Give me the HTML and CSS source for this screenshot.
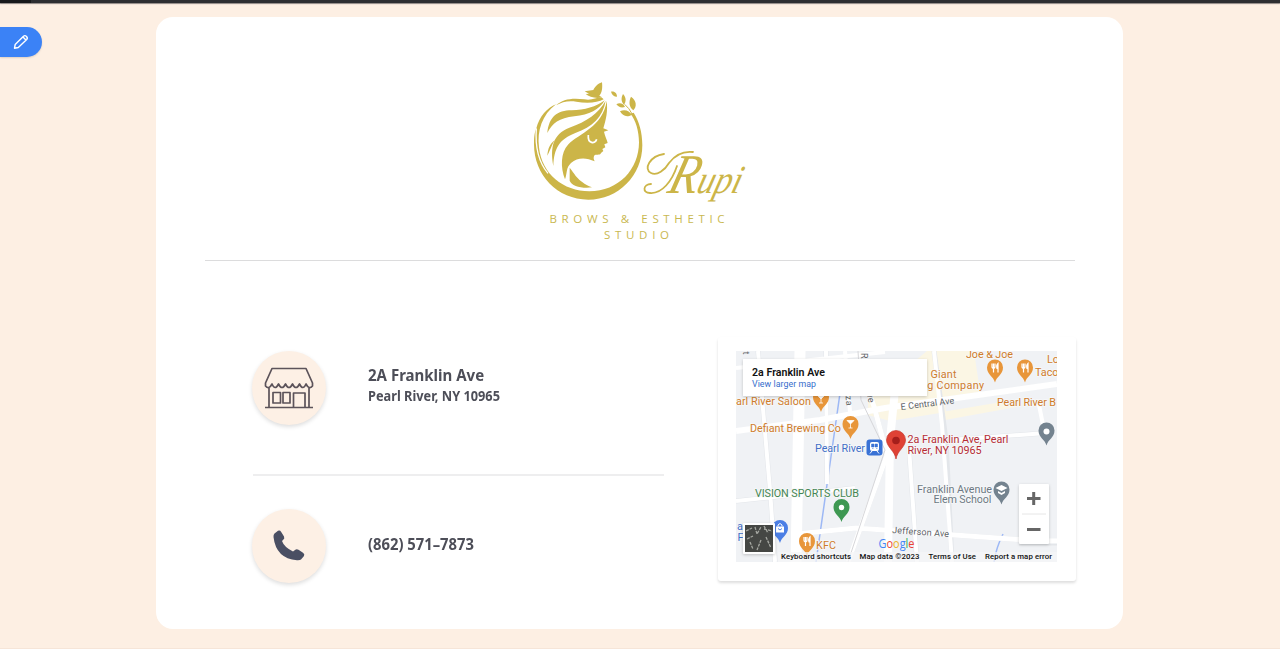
FILE: index.html
```html
<!DOCTYPE html>
<html lang="en">
<head>
<meta charset="utf-8">
<title>Rupi Brows &amp; Esthetic Studio</title>
<link rel="stylesheet" href="styles.css">
</head>
<body>
<div class="topbar"><span class="topbar-dark"></span></div>
<button class="edit" aria-label="Edit">
  <svg width="16" height="16" viewBox="0 0 16 16" fill="none" stroke="#fff" stroke-width="1.400" stroke-linejoin="round"><path d="M1.500 14.200 2.200 10.500 10.500 2.200Q12 1 13.500 2.400 15 4 13.700 5.400L5.300 13.500ZM10 3 12.900 6"/></svg>
</button>
<main class="card">
  <header class="brand">
    <svg class="logo" viewBox="530 75 220 175" width="220" height="175">
      <g transform="translate(520 75) scale(.33333)" fill="#ccb548">
        <path d="M108 88C66 120 51 167 57 217 65 297 130 349 208 349 296 349 357 283 357 202 357 167 347 135 331 116L341 113C357 138 367 171 367 210 367 302 295 374 205 374 112 374 42 300 42 208 42 185 44 171 49 160 58 124 82 98 108 88Z"/>
        <path d="M49 160C45 215 56 262 84 295" fill="none" stroke="#fff" stroke-width="4"/>
        <path d="M108 91C128 72 157 68 193 73 219 77 230 66 246 68L251 73C233 84 198 86 169 80 145 76 126 81 108 91Z"/>
        <path d="M82 174C87 126 111 106 155 106 194 106 229 95 254 76 238 105 208 119 163 124 117 129 97 145 82 174Z"/>
        <path d="M100 273C90 215 99 178 148 158 201 139 235 115 257 77 249 126 217 155 166 174 119 192 102 219 100 273Z"/>
        <path d="M82 242C84 220 89 208 104 196 94 212 93 222 82 242Z"/>
        <path d="M260 78C264 108 258 134 250 160L265 166 252 170C255 184 261 194 263 204L253 208 256 217 247 222 250 228 243 234C240 242 230 237 224 240 219 247 221 253 224 259 199 247 173 246 153 264 137 279 142 296 135 313 121 277 122 233 144 209 178 174 248 157 260 78Z"/>
        <path d="M205 180C202 207 226 208 230 193" fill="none" stroke="#fff" stroke-width="5"/>
        <path d="M149 278C162 292 170 318 216 337 185 341 155 333 149 317Z"/>
        <path d="M194 49 220 45C224 35 237 24 246 22 248 39 246 54 238 62L246 67C227 72 207 65 197 57L207 56Z"/>
        <path d="M273 50C285 48 291 56 291 65 282 65 276 60 273 50ZM309 57C319 67 319 80 312 89 303 80 303 68 309 57ZM289 88C301 81 311 88 315 96 303 100 295 95 289 88ZM333 65C350 77 351 94 340 106 328 96 325 82 333 65ZM300 109C315 101 329 109 335 119 321 129 307 122 300 109Z"/>
        <path d="M314 88Q327 98 338 120" fill="none" stroke="#ccb548" stroke-width="3"/>
      </g>
      <path d="M664 154C650 156 643 169 651 173 657 176 665 170 669 163 675 155 684 151 693 152M677 166C672 181 662 194 650 193 642 193 643 184 651 184" fill="none" stroke="#ccb548" stroke-width="1.800" stroke-linecap="round"/>
      <text class="script-name" transform="translate(666 193) skewX(-16)" textLength="73" lengthAdjust="spacingAndGlyphs"><tspan class="script-cap">R</tspan>upi</text>
      <text class="tagline" x="549.500" y="223.300" textLength="175">BROWS &amp; ESTHETIC</text>
      <text class="tagline" x="604" y="239.300" textLength="65">STUDIO</text>
    </svg>
  </header>
  <div class="content">
    <section class="contacts">
      <div class="contact">
        <span class="disc"><svg width="50" height="42" viewBox="0 0 50 42" fill="none" stroke="#5c535a" stroke-width="1.700" stroke-linejoin="round"><path d="M8 1.500H42L48.500 16V19Q45 23 42 17 39 24 35.500 17 32 24 28.500 17 25 24 21.500 17 18 24 14.500 17 11 24 8 17 5 23 1.500 19V16ZM5 21V40M45 21V40M1 40.500H49M9 25.500H16.500V36H9ZM19 25.500H26V36H19ZM29.500 40V26H41V40"/></svg></span>
        <div class="address"><div class="line-a"><span>2A Franklin Ave</span></div><div class="line-b"><span>Pearl River, NY 10965</span></div></div>
      </div>
      <div class="contact phone">
        <span class="disc"><svg width="32" height="32" viewBox="0 0 32 32" fill="#4a4f63"><path d="M1.500 3.500 5 .800Q7 0 8.200 2L11 6.500Q12 8.500 10 10L9 11Q11 17 20 21.500L22 20Q23.500 18.500 25.500 19.700L30 22.700Q32 24 31 26L28 29.500Q27 30.500 24 30.300 3 28.500 .500 7 .300 4.800 1.500 3.500Z"/></svg></span>
        <div class="number"><span>(862) 571–7873</span></div>
      </div>
    </section>
    <section class="map-card">
      <svg class="map" width="321" height="211" viewBox="736 351 321 211">
        <rect x="736" y="351" width="321" height="211" fill="#f0f2f5"/>
        <path d="M927 351H974L980 392 944 397 946 412 890 421 868 415 868 400ZM942 412 1020 399 1022 406 945 420Z" fill="#fbf6e4"/>
        <path d="M846 351 816 562M1003 534Q996 548 994 562" stroke="#9db8f5" stroke-width="1.500" fill="none"/>
        <g fill="none" stroke="#e3e6ea" stroke-width="5">
          <path d="M736 431 820 420 885 408 1057 384M758 351 770 490 775 562M800 351 796 562M875 410 887 455 848 562M736 501 855 488M796 534 856 528 1040 541"/>
          <path d="M934 351 946 440 952 562M896 380 890 440 888 562M909 448 917 562M949 440 1046 433M826 351 827 484M1019 543H1057"/>
        </g>
        <g fill="none" stroke="#fff">
          <path d="M736 431 820 420 885 408 1057 384" stroke-width="6"/>
          <path d="M736 368 885 352M758 351 770 490 775 562M736 501 855 488M826 351 827 484M845 351 850 412" stroke-width="4"/>
          <path d="M800 351 796 562" stroke-width="11"/>
          <path d="M896 380 890 440 888 562" stroke-width="8"/>
          <path d="M875 410 887 455 848 562M868 390 876 412M796 534 856 528 1040 541 1057 541" stroke-width="5"/>
          <path d="M934 351 942 425 952 562M909 448 917 562M949 440 1046 433M1038 400 1044 430" stroke-width="4"/>
        </g>
        <path d="M858 351 861 400 885 450 848 562" fill="none" stroke="#d6d6d9"/>
        <g class="road">
          <text x="901" y="410" textLength="54" transform="rotate(-7 901 410)">E Central Ave</text>
          <text x="892" y="533" textLength="57" transform="rotate(4 892 533)">Jefferson Ave</text>
          <text x="845" y="391" textLength="15" transform="rotate(84 845 391)">zza</text><text x="867" y="394" transform="rotate(80 867 394)">ve</text><text x="861" y="353" transform="rotate(90 861 353)">R</text><text x="743" y="351.500" transform="rotate(90 743 351.500)">t</text>
        </g>
        <g class="poi food">
          <text x="736" y="405" textLength="75">arl River Saloon</text><text x="750" y="432" textLength="91">Defiant Brewing Co</text>
          <text x="966" y="357.500" textLength="47">Joe &amp; Joe</text><text x="930.500" y="378" textLength="26">Giant</text><text x="921" y="388.500" textLength="63">ng Company</text>
          <text x="1047" y="363">Lo</text><text x="1035" y="376">Taco</text><text x="997" y="406" textLength="59">Pearl River B</text><text x="816" y="549" textLength="20">KFC</text>
        </g>
        <g class="poi">
          <text class="transit" x="815" y="451.500" textLength="50">Pearl River</text>
          <text class="club" x="755" y="496.500" textLength="104">VISION SPORTS CLUB</text>
          <text class="place" x="907.500" y="443" textLength="101">2a Franklin Ave, Pearl</text><text class="place" x="907.500" y="453.500" textLength="74">River, NY 10965</text>
          <text class="school" x="917" y="492.500" textLength="75">Franklin Avenue</text><text class="school" x="933.500" y="503" textLength="58">Elem School</text>
          <text class="transit" x="737" y="530">a</text><text class="transit" x="728" y="541">&amp; F</text>
        </g>
        <defs>
          <path id="pin" d="M0 11C-1.500 5-8 3-8-4A8 8 0 0 1 8-4C8 3 1.500 5 0 11Z"/>
          <path id="fork" d="M-3-8V-5Q-3-3-1.500-3V1M-1.500-8V-3M0-8V-5Q0-3-1.500-3M3 1V-8Q1-6 2-3H3" fill="none" stroke="#fff" stroke-width="1.200"/>
          <path id="glass" d="M-3.500-7.500H3.500L0-4ZM0-4V0M-2 0H2" fill="#fff" stroke="#fff" stroke-width=".800"/>
        </defs>
        <g fill="#e8963a">
          <use href="#pin" x="821" y="401"/><use href="#glass" x="821" y="403"/>
          <use href="#pin" x="850.500" y="428"/><use href="#glass" x="850.500" y="428"/>
          <use href="#pin" x="995" y="371.500"/><use href="#fork" x="995" y="371.500"/>
          <use href="#pin" x="1025" y="371.500"/><use href="#fork" x="1025" y="371.500"/>
          <use href="#pin" x="807" y="545"/><use href="#fork" x="807" y="545"/>
        </g>
        <use href="#pin" x="1046.500" y="434.500" fill="#74838f"/><circle cx="1046.500" cy="431.500" r="3" fill="#fff"/>
        <use href="#pin" x="841.500" y="511" fill="#3e9852"/><circle cx="841.500" cy="507.500" r="2.700" fill="#fff"/>
        <use href="#pin" x="1001.500" y="493.500" fill="#74838f"/><path d="M995.500 488 1001.500 485 1007.500 488 1001.500 491ZM998 491 1001.500 493 1005 491V493L1001.500 495 998 493Z" fill="#fff"/>
        <use href="#pin" x="780" y="532" fill="#4c7fe5"/><path d="M776 526.500H784V532.500H776Z" fill="#fff"/><path d="M778 526.500V525Q780 522 782 525V526.500" fill="none" stroke="#fff"/><path d="M778 528.500Q780 531.500 782 528.500" fill="none" stroke="#4c7fe5"/>
        <rect x="866.500" y="439.500" width="16" height="16" rx="3" fill="#3972d5"/><rect x="870" y="442" width="9" height="9" rx="2" fill="#fff"/><path d="M871.500 444H874V447H871.500ZM875 444H877.500V447H875ZM872 448.500H873.500M876 448.500H877.500" fill="#3972d5" stroke="#3972d5" stroke-width=".500"/><path d="M872 451 870 453.500M877 451 879 453.500" stroke="#fff"/>
        <path d="M896 459C895 451 886.500 447 886.500 440A9.500 9.500 0 0 1 905.500 440C905.500 447 897 451 896 459Z" fill="#df4235" stroke="#c6392f" stroke-width=".700"/><circle cx="896" cy="440.500" r="3.800" fill="#a51e1b"/>
        <text class="google" x="878.500" y="547.500" textLength="36" lengthAdjust="spacingAndGlyphs"><tspan fill="#4285f4">G</tspan><tspan fill="#ea4335">o</tspan><tspan fill="#edb31b">o</tspan><tspan fill="#4285f4">g</tspan><tspan fill="#34a853">l</tspan><tspan fill="#ea4335">e</tspan></text>
        <rect x="778" y="552" width="279" height="10" fill="#f5f6f7" opacity=".75"/>
        <g class="legal"><text x="781" y="559" textLength="70">Keyboard shortcuts</text><text x="859.500" y="559" textLength="60">Map data ©2023</text><text x="928.500" y="559" textLength="47.500">Terms of Use</text><text x="985" y="559" textLength="67">Report a map error</text></g>
        <g class="raised"><rect x="743" y="359" width="184" height="37" fill="#fff"/></g>
        <text class="place-title" x="752" y="376" textLength="73">2a Franklin Ave</text><text class="place-link" x="752" y="387" textLength="64">View larger map</text>
        <g class="raised"><rect x="743" y="523" width="32" height="31" rx="1" fill="#fff"/><rect x="745" y="525" width="28" height="27" fill="#454744"/></g>
        <path d="M746 531 752 528M755 527 757 534 761 527M764 526 768 533M747 539 753 536M750 542 753 549M761 540 757 550M766 537 771 548M764 529 772 531" fill="none" stroke="#a5a7a1" stroke-width="1.300" stroke-dasharray="3 1"/>
        <g class="raised"><rect x="1019" y="484" width="30" height="60" rx="1" fill="#fff"/></g>
        <path d="M1022 514H1046" stroke="#e6e6e6"/><path d="M1027 498.500H1040.500M1033.700 492V505M1027 529.500H1040.500" stroke="#666" stroke-width="3"/>
      </svg>
    </section>
  </div>
</main>
</body>
</html>
```
FILE: styles.css
```css
* { box-sizing: border-box; }
html { background: #fdefe3; }
body { margin: 0; height: 649px; overflow: hidden; background: #fdefe3; font-family: "Noto Sans", sans-serif; border-bottom: 1px solid #f6e5d8; }
.topbar { height: 3px; background: #2d2e31; box-shadow: 0 1px 1px #8d8582; }
.topbar-dark { display: block; width: 31px; height: 3px; background: #17181a; }
.edit { position: absolute; left: 0; top: 27px; width: 42px; height: 30px; padding: 0 0 0 13px; border: 0; border-radius: 0 15px 15px 0; background: #3b82f6; display: flex; align-items: center; box-shadow: 0 1px 2px #0002; }
.card { width: 967px; height: 612px; margin: 14px 0 0 156px; padding: 58px 48px 0 49px; background: #fff; border-radius: 17px; }
.brand { display: flex; justify-content: center; height: 186px; border-bottom: 1px solid #dcdcdd; }
.logo { display: block; overflow: visible; }
.script-name { font: italic 40px "Liberation Serif", serif; fill: #ccb548; }
.script-cap { font-size: 56px; }
.tagline { font: 11.5px "Open Sans", sans-serif; fill: #c9b851; }
.content { display: flex; justify-content: space-between; margin-right: -1px; padding-top: 76px; }
.contacts { width: 411px; margin-left: 48px; padding-top: 15px; }
.contact { display: flex; align-items: center; gap: 41.500px; height: 124px; padding-bottom: 50px; border-bottom: 2px solid #eeeeef; color: #4d4e58; font-weight: 700; }
.contact.phone { height: 107px; padding: 32px 0 0; border: 0; }
.disc { width: 74px; height: 74px; flex: none; border-radius: 50%; background: #fdf0e5; display: flex; align-items: center; justify-content: center; box-shadow: 0 2px 4px #0002; margin-left: -1px; }
.address { margin-top: -7px; white-space: nowrap; }
.address span, .number span { display: inline-block; transform-origin: left; }
.line-a { font-size: 16.500px; line-height: 22px; }
.line-b { font-size: 14px; line-height: 19px; }
.line-a span { transform: scaleX(.91); }
.line-b span { transform: scaleX(.912); }
.number { margin-top: -3px; font-size: 16px; white-space: nowrap; }
.number span { transform: scaleX(.925); }
.map-card { width: 358px; height: 244px; padding: 14px 18px; background: #fff; border-radius: 3px; box-shadow: 0 2px 3px #0002; }
.map { display: block; overflow: hidden; font-family: Roboto, sans-serif; }
.poi { font-size: 10.800px; paint-order: stroke; stroke: #f7f8f9; stroke-width: 1.500px; }
.food { fill: #cf7c2a; }
.transit { fill: #426fc7; }
.club { fill: #458653; }
.place { fill: #b52c34; }
.school { fill: #6d7883; }
.road { font-size: 9px; fill: #606368; }
.google { font: 12px "Open Sans", sans-serif; font-weight: 500; }
.legal { font-size: 7.800px; font-weight: 500; fill: #111; }
.raised { filter: drop-shadow(0 1px 1.500px #0003); }
.place-title { font-size: 10.600px; font-weight: 600; fill: #111; }
.place-link { font-size: 8.800px; fill: #356dcc; }
```
